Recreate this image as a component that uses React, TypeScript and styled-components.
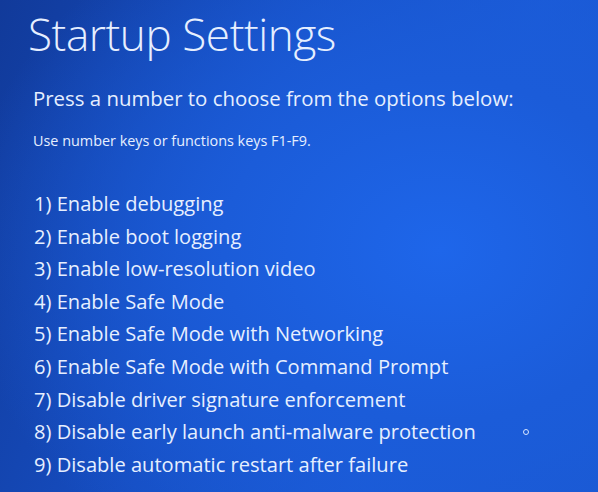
import React from "react";
import styled, { createGlobalStyle } from "styled-components";

const Global = createGlobalStyle`
  html, body { margin: 0; padding: 0; }
  body { width: 598px; height: 492px; overflow: hidden; }
  #root { height: 100%; }
`;

const Screen = styled.div`
  box-sizing: border-box;
  width: 598px;
  height: 492px;
  padding: 6px 0 0 28px;
  background:
    radial-gradient(ellipse 480px 380px at 440px 250px, #1e66ea 0%, #1b5cd9 45%, rgba(27, 90, 216, 0) 100%),
    linear-gradient(110deg, #113a9a 0%, #164ec2 40%, #1a5ad6 70%, #1a58d0 100%);
  color: #e6efff;
  font-family: "Open Sans", "Noto Sans", sans-serif;
  display: flex;
  flex-direction: column;
`;

const Title = styled.h1`
  margin: 0;
  font-size: 44px;
  font-weight: 300;
  line-height: 56px;
  letter-spacing: -0.4px;
`;

const Lead = styled.p`
  margin: 21px 0 0 5px;
  font-size: 20.4px;
  line-height: 30px;
  font-weight: 400;
`;

const Hint = styled.p`
  margin: 18px 0 0 5px;
  font-size: 14.4px;
  line-height: 20px;
`;

const Options = styled.ol`
  list-style: none;
  margin: 37px 0 0 6px;
  padding: 0;
  display: flex;
  flex-direction: column;
`;

const Option = styled.li`
  font-size: 20.1px;
  line-height: 32.6px;
`;

const Dot = styled.span`
  position: absolute;
  left: 523px;
  top: 429px;
  width: 4px;
  height: 4px;
  border: 1px solid #d8e6ff;
  border-radius: 50%;
`;

const items = [
  "Enable debugging",
  "Enable boot logging",
  "Enable low-resolution video",
  "Enable Safe Mode",
  "Enable Safe Mode with Networking",
  "Enable Safe Mode with Command Prompt",
  "Disable driver signature enforcement",
  "Disable early launch anti-malware protection",
  "Disable automatic restart after failure",
];

export default function App() {
  return (
    <>
      <Global />
      <Screen>
        <Title>Startup Settings</Title>
        <Lead>Press a number to choose from the options below:</Lead>
        <Hint>Use number keys or functions keys F1-F9.</Hint>
        <Options>
          {items.map((t, i) => (
            <Option key={t}>
              {i + 1}) {t}
            </Option>
          ))}
        </Options>
        <Dot />
      </Screen>
    </>
  );
}
